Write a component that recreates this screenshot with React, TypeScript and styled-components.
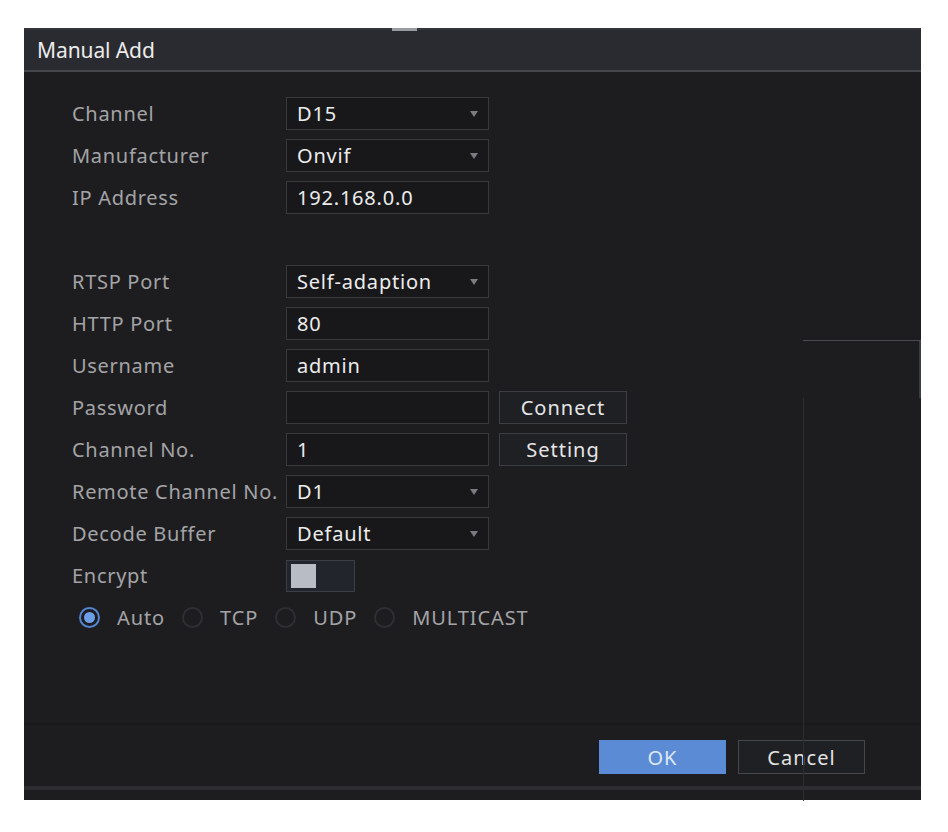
import React from "react";
import styled, { createGlobalStyle } from "styled-components";

const Global = createGlobalStyle`
  html, body { margin: 0; padding: 0; background: #ffffff; }
  body { font-family: "Noto Sans", "Open Sans", sans-serif; }
  #root { width: 948px; height: 832px; }
`;

const Page = styled.div`
  width: 948px;
  height: 832px;
  padding: 28px 27px 32px 24px;
  box-sizing: border-box;
  position: relative;
`;

const Dialog = styled.div`
  width: 897px;
  height: 772px;
  background: #1d1d20;
  display: flex;
  flex-direction: column;
  position: relative;
`;

const TopTab = styled.div`
  position: absolute;
  top: 0;
  left: 368px;
  width: 25px;
  height: 3px;
  background: #9a9ca3;
`;

const TitleBar = styled.div`
  height: 44px;
  box-sizing: border-box;
  background: #2a2b30;
  border-top: 2px solid #34353a;
  border-bottom: 2px solid #46474c;
  display: flex;
  align-items: center;
  padding-left: 13px;
  font-family: "Noto Sans", sans-serif;
  font-size: 21px;
  letter-spacing: -0.1px;
  color: #ececec;
`;

const Body = styled.div`
  flex: 1;
  padding: 25px 0 0 48px;
`;

const Form = styled.div`
  display: grid;
  grid-template-columns: 214px 203px 10px 128px;
  grid-auto-rows: 33px;
  row-gap: 9px;
  align-items: center;
`;

const Label = styled.div`
  grid-column: 1;
  color: #a4a4a7;
  font-size: 20px;
  letter-spacing: 0.7px;
  white-space: nowrap;
`;

const Spacer = styled.div`
  grid-column: 1 / -1;
`;

const Field = styled.div`
  grid-column: 2;
  height: 33px;
  box-sizing: border-box;
  border: 1px solid #38383d;
  background: #18181b;
  display: flex;
  align-items: center;
  justify-content: space-between;
  padding: 0 10px 0 10px;
  color: #ececec;
  font-size: 20px;
  letter-spacing: 0.8px;
`;

const Arrow = styled.span`
  width: 0;
  height: 0;
  border-left: 4px solid transparent;
  border-right: 4px solid transparent;
  border-top: 6px solid #7c7c80;
`;

const SideButton = styled.div`
  grid-column: 4;
  height: 33px;
  box-sizing: border-box;
  border: 1px solid #3d3e43;
  background: #1f2024;
  color: #e6e6e6;
  font-size: 20px;
  letter-spacing: 1px;
  display: flex;
  align-items: center;
  justify-content: center;
`;

const Toggle = styled.div`
  grid-column: 2;
  width: 69px;
  height: 32px;
  box-sizing: border-box;
  border: 1px solid #3a3e46;
  background: #22252b;
  padding: 3px 4px;
  display: flex;
`;

const Knob = styled.div`
  width: 25px;
  height: 24px;
  background: #b8bcc4;
`;

const RadioRow = styled.div`
  grid-column: 1 / -1;
  display: flex;
  align-items: center;
  padding-left: 7px;
`;

const RadioItem = styled.div`
  display: flex;
  align-items: center;
  gap: 17px;
  margin-right: 17px;
  color: #a4a4a7;
  font-size: 20px;
  letter-spacing: 0.9px;
`;

const RadioCircle = styled.span<{ $on?: boolean }>`
  width: 21px;
  height: 21px;
  box-sizing: border-box;
  border-radius: 50%;
  border: 2px solid ${(p) => (p.$on ? "#5284d0" : "#2e2f33")};
  display: flex;
  align-items: center;
  justify-content: center;
  &::after {
    content: "";
    width: 11px;
    height: 11px;
    border-radius: 50%;
    background: ${(p) => (p.$on ? "#6d9fe8" : "transparent")};
  }
`;

const Footer = styled.div`
  border-top: 2px solid #19191b;
  height: 63px;
  box-sizing: border-box;
  display: flex;
  align-items: flex-start;
  justify-content: flex-end;
  padding: 15px 56px 0 0;
  gap: 12px;
`;

const FootButton = styled.div<{ $primary?: boolean }>`
  width: 127px;
  height: 34px;
  box-sizing: border-box;
  background: ${(p) => (p.$primary ? "#5b8bd4" : "#1f2023")};
  border: 1px solid ${(p) => (p.$primary ? "#5b8bd4" : "#46474b")};
  color: ${(p) => (p.$primary ? "#dfe9f7" : "#e3e3e3")};
  font-size: 20px;
  letter-spacing: 1px;
  display: flex;
  align-items: center;
  justify-content: center;
`;

const BottomStrip = styled.div`
  height: 4px;
  background: #2d2d32;
  margin-bottom: 10px;
`;

const Overlay = styled.div`
  position: absolute;
  left: 779px;
  top: 312px;
  width: 118px;
  height: 460px;
  border-top: 1px solid #4a4b50;
  pointer-events: none;
  &::before {
    content: "";
    position: absolute;
    left: 0;
    top: 57px;
    bottom: 0;
    width: 1px;
    background: #2c2d31;
  }
  &::after {
    content: "";
    position: absolute;
    right: 0;
    top: 0;
    height: 57px;
    width: 2px;
    background: #3a3d43;
  }
`;

type RowData = { label: string; value?: string; select?: boolean; side?: string };

const rows: RowData[] = [
  { label: "Channel", value: "D15", select: true },
  { label: "Manufacturer", value: "Onvif", select: true },
  { label: "IP Address", value: "192.168.0.0" },
];

const rows2: RowData[] = [
  { label: "RTSP Port", value: "Self-adaption", select: true },
  { label: "HTTP Port", value: "80" },
  { label: "Username", value: "admin" },
  { label: "Password", value: "", side: "Connect" },
  { label: "Channel No.", value: "1", side: "Setting" },
  { label: "Remote Channel No.", value: "D1", select: true },
  { label: "Decode Buffer", value: "Default", select: true },
];

const Row = ({ r }: { r: RowData }) => (
  <>
    <Label>{r.label}</Label>
    <Field>
      <span>{r.value}</span>
      {r.select && <Arrow />}
    </Field>
    {r.side && <SideButton>{r.side}</SideButton>}
  </>
);

export default function App() {
  return (
    <>
      <Global />
      <Page>
        <Dialog>
          <TopTab />
          <TitleBar>Manual Add</TitleBar>
          <Body>
            <Form>
              {rows.map((r) => (
                <Row key={r.label} r={r} />
              ))}
              <Spacer />
              {rows2.map((r) => (
                <Row key={r.label} r={r} />
              ))}
              <Label>Encrypt</Label>
              <Toggle>
                <Knob />
              </Toggle>
              <RadioRow>
                <RadioItem>
                  <RadioCircle $on />
                  Auto
                </RadioItem>
                <RadioItem>
                  <RadioCircle />
                  TCP
                </RadioItem>
                <RadioItem>
                  <RadioCircle />
                  UDP
                </RadioItem>
                <RadioItem>
                  <RadioCircle />
                  MULTICAST
                </RadioItem>
              </RadioRow>
            </Form>
          </Body>
          <Footer>
            <FootButton $primary>OK</FootButton>
            <FootButton>Cancel</FootButton>
          </Footer>
          <BottomStrip />
          <Overlay />
        </Dialog>
      </Page>
    </>
  );
}
